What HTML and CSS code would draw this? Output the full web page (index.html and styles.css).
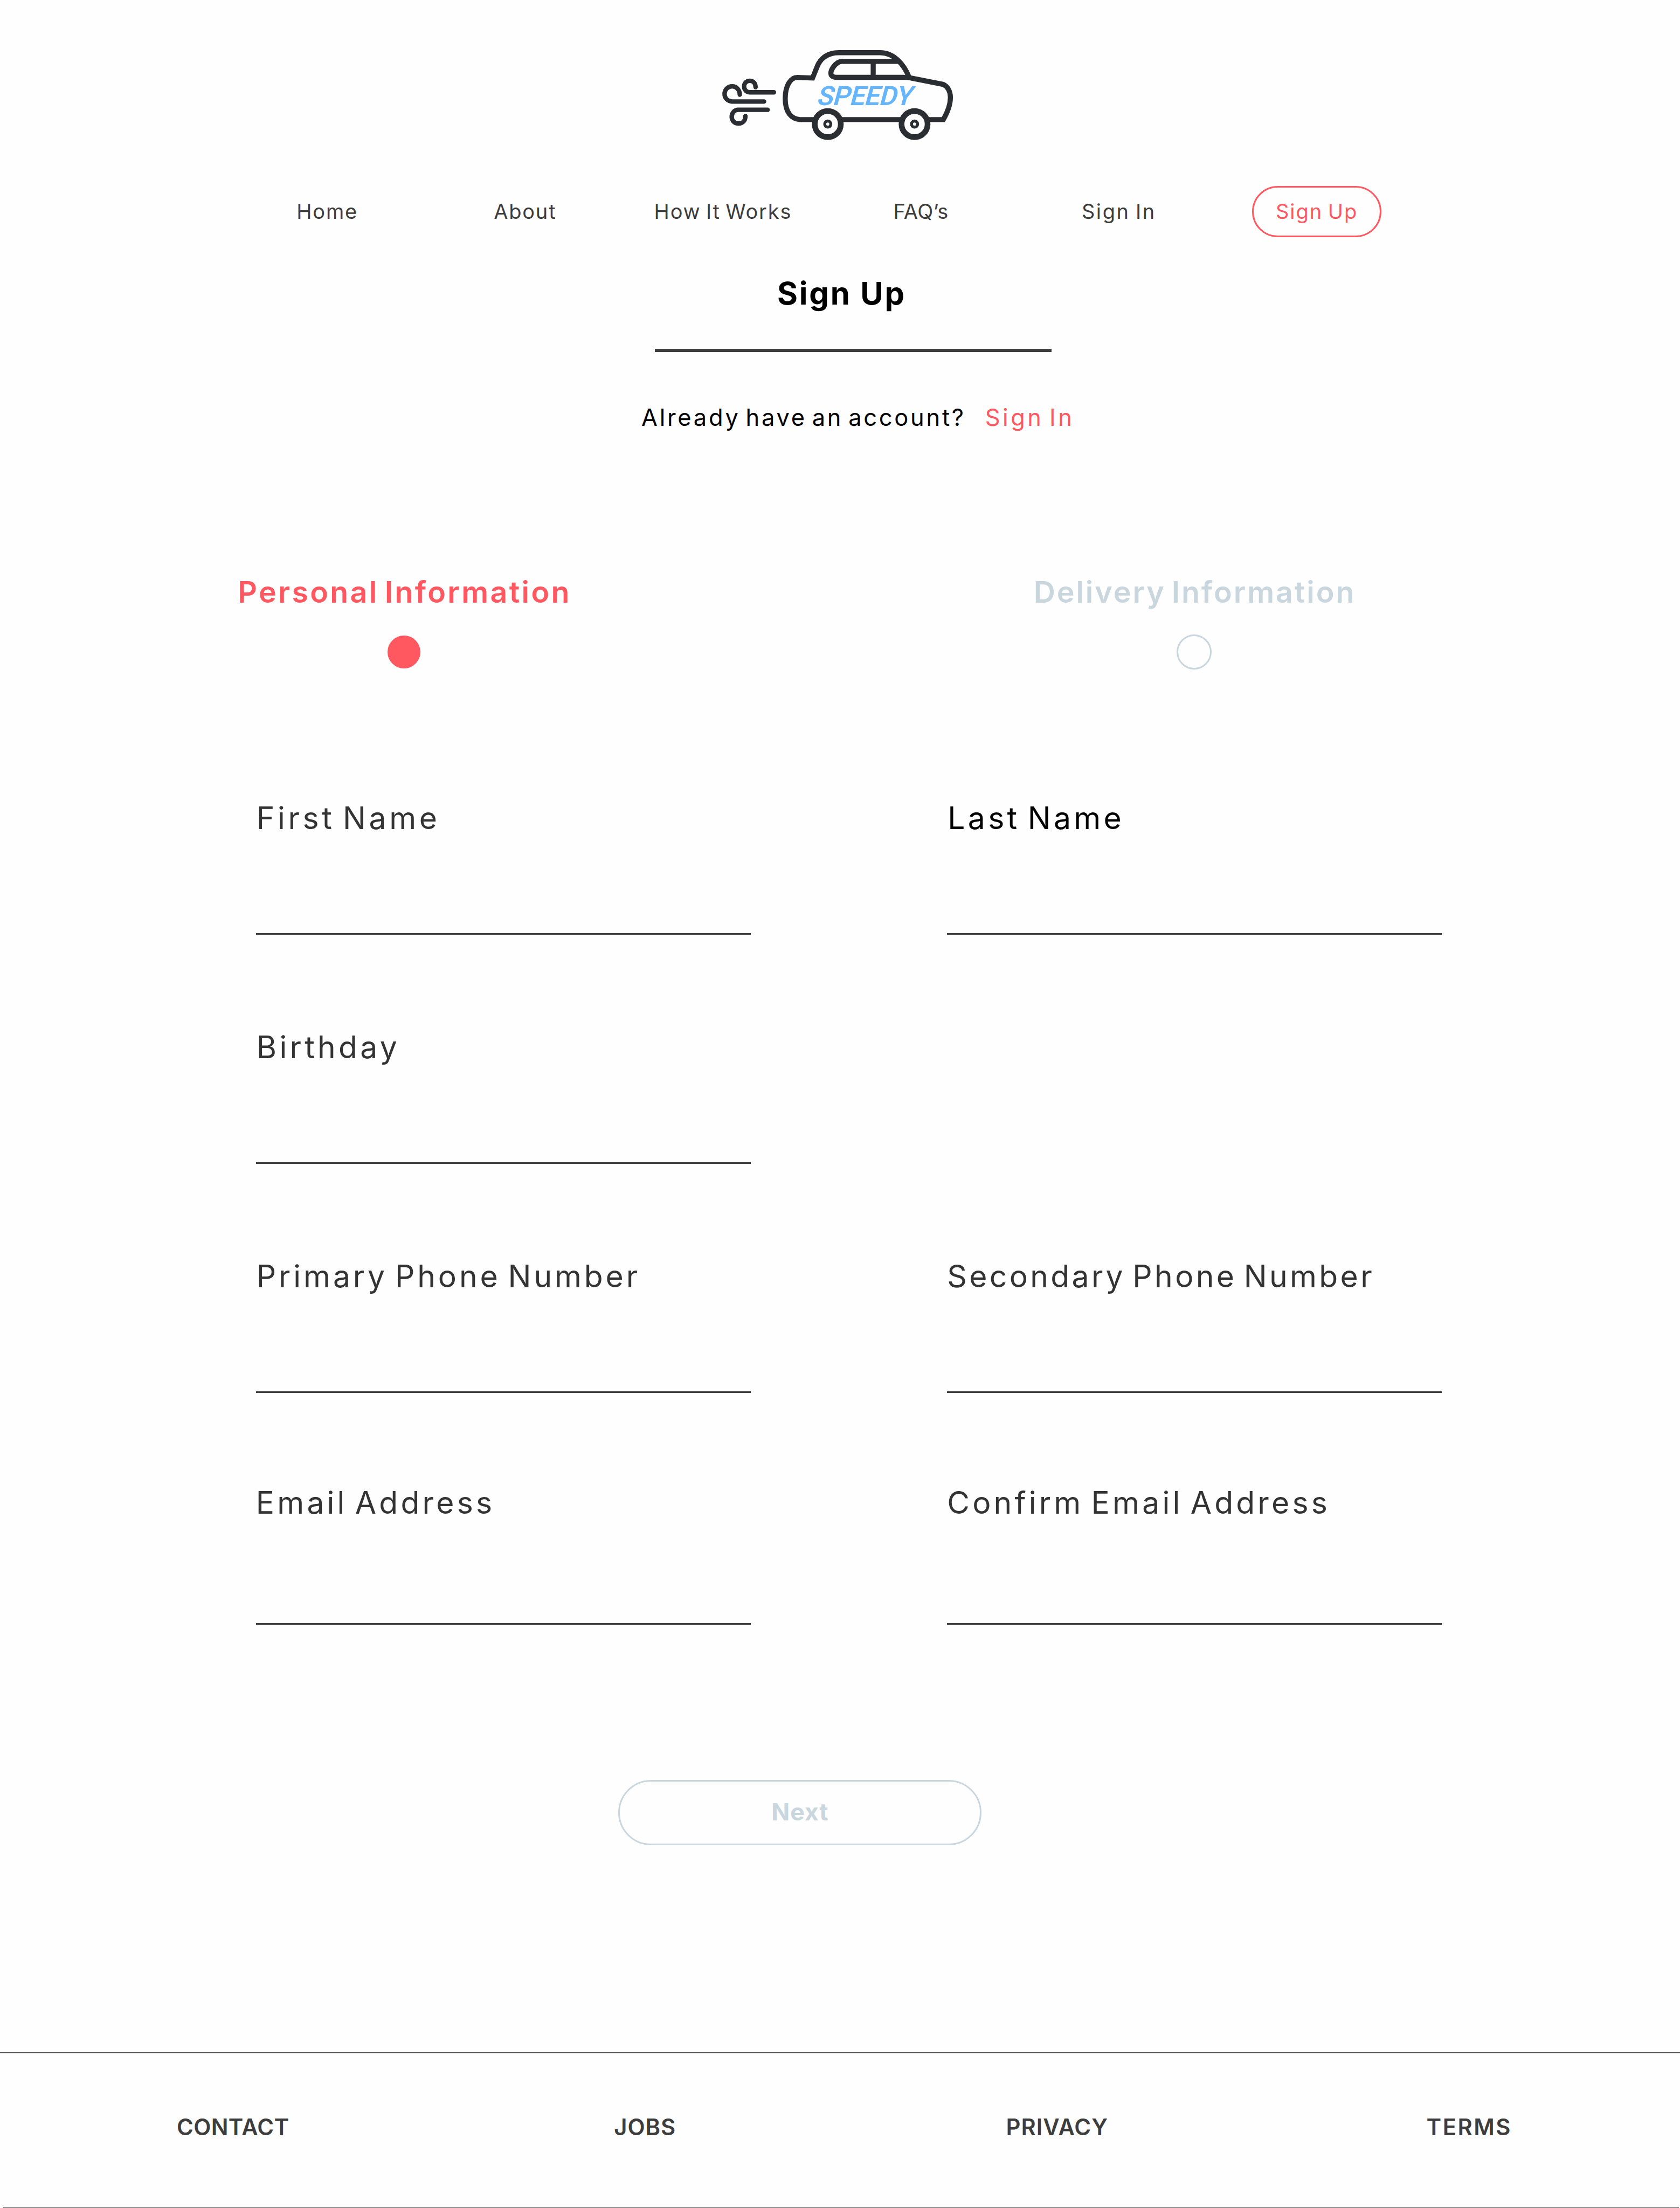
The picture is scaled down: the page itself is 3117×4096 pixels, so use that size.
FILE: index.html
```html
<!DOCTYPE html>
<html lang="en">
<head>
  <meta charset="utf-8">
  <title>Speedy – Sign Up</title>
  <link rel="stylesheet" href="styles.css">
</head>
<body>
  <header class="header">
    <svg class="logo" viewBox="0 0 640 280" role="img" aria-label="Speedy">
      <g class="logo-wind">
        <path d="M159.5 134H98.4C89 133.5 84 127 84 119.5C84 111 90 104.8 98.4 104.8C107 104.8 113 111 113 121"/>
        <path d="M134.5 157.3H53C42 156 34.5 149 34.5 138C34.5 127 43 118.8 53.7 118.8C64 118.8 73 127 73 140"/>
        <path d="M143.5 178.3H68C59 179 52.6 187 52.6 196C52.6 206 60 213 70 213C80 213 87.3 206 87.3 194"/>
      </g>
      <g class="logo-car">
        <path d="M502 97L587.8 114C598 119 606 130 606 147C606 165 599 184 588 203H225C203 201 188 184 188 150C188 118 201 96 219 96.3L257.2 97.7L270 66C279 46 298 33.7 322.4 33.7H428.6C462 33.7 488 62 502 97Z"/>
        <path d="M502 96.2H318C308 96 303.3 92 303.5 85C304 76 312 65 321 59Q326 55.8 332 55.8H478"/>
        <path d="M410.6 56V96"/>
      </g>
      <g class="logo-tire">
        <circle cx="295.7" cy="214.4" r="33"/>
        <circle cx="515.3" cy="214.4" r="33"/>
      </g>
      <g class="logo-hub">
        <circle cx="295.7" cy="214.4" r="7.7"/>
        <circle cx="515.3" cy="214.4" r="7.7"/>
      </g>
      <text class="logo-text" transform="translate(266 166) skewX(-15)" textLength="241">SPEEDY</text>
    </svg>
    <nav class="nav">
      <a class="nav-link">Home</a>
      <a class="nav-link">About</a>
      <a class="nav-link">How It Works</a>
      <a class="nav-link nav-link-short">FAQ’s</a>
      <a class="nav-link nav-link-signin">Sign In</a>
      <a class="nav-link nav-pill">Sign Up</a>
    </nav>
  </header>

  <main class="main">
    <h1 class="title">Sign Up</h1>
    <div class="title-rule"></div>
    <p class="prompt"><span class="prompt-text">Already have an account?</span><a class="prompt-link">Sign In</a></p>

    <div class="steps">
      <div class="step step-active"><span class="step-name">Personal Information</span><span class="step-dot"></span></div>
      <div class="step"><span class="step-name">Delivery Information</span><span class="step-dot"></span></div>
    </div>

    <form class="form">
      <label class="field">First Name</label>
      <label class="field field-dark">Last Name</label>
      <label class="field field-wide">Birthday</label>
      <label class="field field-phone">Primary Phone Number</label>
      <label class="field field-phone-alt">Secondary Phone Number</label>
      <label class="field field-tall">Email Address</label>
      <label class="field field-tall">Confirm Email Address</label>
    </form>

    <button class="next" type="button">Next</button>
  </main>

  <footer class="footer">
    <div class="footer-links">
      <a class="footer-contact">CONTACT</a>
      <a>JOBS</a>
      <a>PRIVACY</a>
      <a class="footer-terms">TERMS</a>
    </div>
    <div class="footer-rule"></div>
  </footer>
</body>
</html>
```
FILE: styles.css
```css
:root {
  --ink: #3d3d3d;
  --label: #333333;
  --accent: #ff5860;
  --muted: #c9d6de;
  --logo: #2a2e32;
  --sky: #64b5fc;
}

* { box-sizing: border-box; }

body {
  margin: 0;
  width: 3117px;
  height: 4096px;
  display: flex;
  flex-direction: column;
  background: #fefefe;
  color: var(--ink);
  font-family: Inter, "Liberation Sans", sans-serif;
  overflow: hidden;
}

/* Header */
.header { padding-top: 73px; }

.logo {
  display: block;
  width: 469.3px;
  height: 205.3px;
  margin-left: 1319px;
}

.logo path, .logo circle { fill: none; stroke: var(--logo); }
.logo-wind path { stroke-width: 11.3; stroke-linecap: round; }
.logo-car path { stroke-width: 12.8; }
.logo .logo-tire circle { fill: #fefefe; stroke-width: 14.4; }
.logo-hub circle { stroke-width: 7.5; }
.logo-text { fill: var(--sky); font: 600 67.5px Roboto, "Liberation Sans", sans-serif; }

.nav {
  display: grid;
  grid-template-columns: repeat(6, 367.2px);
  justify-items: center;
  align-items: center;
  height: 95px;
  margin: 67px 0 0 423.5px;
}

.nav-link {
  margin-top: -2px;
  font-size: 38px;
  letter-spacing: 1.8px;
  word-spacing: -3px;
  white-space: nowrap;
}

.nav-link-short { letter-spacing: 0.5px; }
.nav-link-signin { letter-spacing: 2.6px; }

.nav-pill {
  display: flex;
  align-items: center;
  justify-content: center;
  width: 240px;
  height: 95px;
  margin-top: 0;
  padding-bottom: 2px;
  border: 3px solid var(--accent);
  border-radius: 48px;
  color: var(--accent);
  letter-spacing: 1.95px;
}

/* Title */
.main { display: flex; flex-direction: column; }

.title {
  margin: 70px 0 0 1442px;
  color: #000;
  font-size: 58px;
  font-weight: 700;
  line-height: 68px;
  letter-spacing: 2.8px;
}

.title-rule {
  width: 736px;
  height: 6px;
  margin: 69px 0 0 1215px;
  background: var(--ink);
}

.prompt {
  display: flex;
  gap: 36px;
  margin: 97px 0 0 1190px;
  color: #000;
  font-size: 43.4px;
  line-height: 49px;
  letter-spacing: 3.75px;
  word-spacing: -6px;
  white-space: nowrap;
}

.prompt-link { color: var(--accent); letter-spacing: 4.5px; }

/* Steps */
.steps {
  display: grid;
  grid-template-columns: 700px 700px;
  column-gap: 766px;
  height: 176px;
  margin: 267px 0 0 399px;
}

.step {
  display: flex;
  flex-direction: column;
  align-items: center;
  color: var(--muted);
}

.step-active { color: var(--accent); }

.step-name {
  padding-left: 3px;
  font-size: 55.5px;
  font-weight: 600;
  line-height: 64px;
  letter-spacing: 2.9px;
  word-spacing: -6px;
  white-space: nowrap;
}

.step-active .step-name { letter-spacing: 3.3px; }

.step-dot {
  width: 65px;
  height: 65px;
  margin-top: 47px;
  border: 3px solid currentColor;
  border-radius: 50%;
}

.step-active .step-dot {
  width: 61px;
  height: 61px;
  margin-top: 49px;
  background: currentColor;
}

/* Form */
.form {
  display: grid;
  grid-template-columns: 918px 918px;
  grid-template-rows: 424.5px 425.5px 419.5px 260.5px;
  column-gap: 364.5px;
  margin: 242px 0 0 474.8px;
}

.field {
  height: 250px;
  padding-left: 1px;
  border-bottom: 3px solid var(--ink);
  color: var(--label);
  font-size: 57px;
  line-height: 67px;
  letter-spacing: 5.6px;
  word-spacing: -7px;
}

.field-dark { color: #000; letter-spacing: 5.3px; }
.field-phone { letter-spacing: 4.9px; }
.field-phone-alt { padding-left: 0; letter-spacing: 4.35px; }
.field-tall { height: 260.5px; padding-left: 0; letter-spacing: 5.2px; }
.field-wide { grid-column: 1 / -1; width: 918px; letter-spacing: 5.3px; }

.next {
  width: 674px;
  height: 121px;
  margin: 288px 0 0 1147px;
  padding: 0 0 4px 1px;
  border: 3px solid var(--muted);
  border-radius: 61px;
  background: none;
  color: var(--muted);
  font: 700 44.5px Inter, "Liberation Sans", sans-serif;
  letter-spacing: 1px;
}

/* Footer */
.footer {
  display: flex;
  flex-direction: column;
  justify-content: space-between;
  height: 289px;
  margin-top: auto;
  border-top: 2px solid #58585a;
}

.footer-links {
  display: grid;
  grid-template-columns: repeat(4, 764.5px);
  justify-items: center;
  padding: 112px 0 0 50px;
  font-size: 41.8px;
  font-weight: 600;
  line-height: 50px;
  letter-spacing: 1px;
}

.footer-contact { letter-spacing: 0.4px; }
.footer-terms { letter-spacing: 2.5px; }

.footer-rule {
  height: 1px;
  margin: 0 2px 0 6px;
  background: #4a4a4a;
}
```
